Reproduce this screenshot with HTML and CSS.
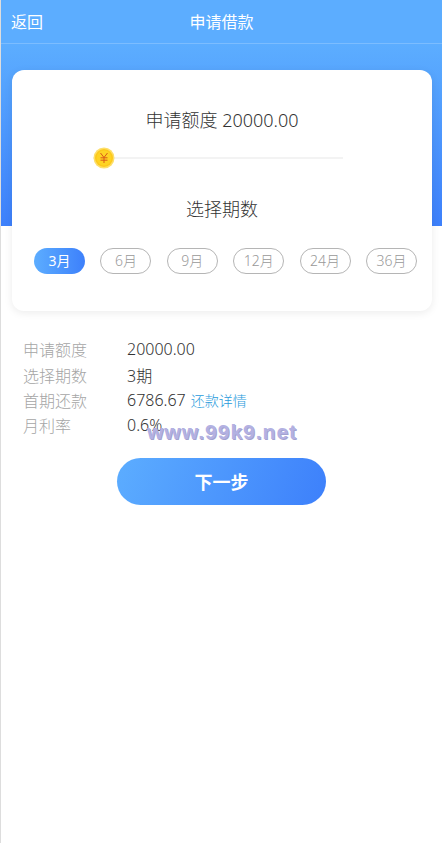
FILE: index.html
```html
<!DOCTYPE html>
<html lang="zh-CN">

<head>
    <meta charset="UTF-8">
    <meta name="viewport" content="width=device-width, initial-scale=1.0">
    <title>申请借款</title>
    <link rel="stylesheet" href="styles.css">
</head>

<body>
    <div class="page">
        <div class="top-bg">
            <header class="top-bar">
                <a class="back">返回</a>
                <h1 class="top-title">申请借款</h1>
            </header>
        </div>

        <section class="card">
            <p class="card-title">申请额度 20000.00</p>
            <div class="slider">
                <div class="slider-line"></div>
                <svg class="coin" width="22" height="22" viewBox="0 0 22 22">
                    <circle cx="11" cy="11" r="10.5" fill="#fddf6b"/>
                    <circle cx="11" cy="11" r="9" fill="#fdc91c"/>
                    <circle cx="11" cy="11" r="7.5" fill="#fed324"/>
                    <path d="M7.5 6 L11 10.5 L14.5 6 M11 10.5 V16 M7.5 10.8 H14.5 M7.5 13.2 H14.5" fill="none" stroke="#d9591a" stroke-width="1"/>
                </svg>
            </div>
            <p class="card-title term-title">选择期数</p>
            <ul class="terms">
                <li class="term select">3月</li>
                <li class="term">6月</li>
                <li class="term">9月</li>
                <li class="term">12月</li>
                <li class="term">24月</li>
                <li class="term">36月</li>
            </ul>
        </section>

        <section class="info">
            <div class="info-row"><span class="info-label">申请额度</span><span class="info-value">20000.00</span></div>
            <div class="info-row"><span class="info-label">选择期数</span><span class="info-value">3期</span></div>
            <div class="info-row"><span class="info-label">首期还款</span><span class="info-value">6786.67</span><a class="info-link">还款详情</a></div>
            <div class="info-row"><span class="info-label">月利率</span><span class="info-value">0.6%</span></div>
        </section>

        <button class="next-btn">下一步</button>

        <div class="watermark">www.99k9.net</div>
    </div>
</body>

</html>
```
FILE: styles.css
```css
* {
    box-sizing: border-box;
}

body {
    margin: 0;
    background: #fff;
    font-family: "Noto Sans", "Noto Sans CJK SC", sans-serif;
    font-weight: 300;
    color: #333;
}

.page {
    position: relative;
    height: 843px;
    overflow: hidden;
    border-left: 1px solid #ddd;
}

.top-bg {
    height: 226px;
    background: linear-gradient(180deg, #5cadff 0%, #5cadff 20%, #3d80fb 100%);
}

.top-bar {
    display: flex;
    align-items: center;
    justify-content: center;
    position: relative;
    height: 44px;
    padding-bottom: 2px;
    border-bottom: 1px solid #7cbdff;
    color: #fff;
    font-weight: 400;
}

.back {
    position: absolute;
    left: 10px;
    font-size: 16px;
}

.top-title {
    margin: 0;
    font-size: 16px;
    font-weight: 400;
}

.card {
    margin: -156px 10px 0 11px;
    position: relative;
    height: 241px;
    padding-top: 36px;
    background: #fff;
    border-radius: 12px;
    box-shadow: 0 2px 8px rgba(0, 0, 0, 0.08);
}

.card-title {
    margin: 0;
    text-align: center;
    font-size: 18px;
    line-height: 28px;
}

.slider {
    position: relative;
    height: 22px;
    margin: 13px 89px 0 81px;
    display: flex;
    align-items: center;
}

.slider-line {
    width: 100%;
    height: 2px;
    background: #f3f3f3;
}

.coin {
    position: absolute;
    left: 0;
    top: 0;
}

.term-title {
    margin-top: 26px;
}

.terms {
    list-style: none;
    margin: 25px 0 0;
    padding: 0 15px 0 22px;
    display: flex;
    justify-content: space-between;
}

.term {
    width: 51px;
    height: 26px;
    border: 1px solid #b5b5b5;
    border-radius: 13px;
    color: #999;
    font-size: 14px;
    line-height: 24px;
    text-align: center;
}

.term.select {
    border: 0;
    line-height: 26px;
    color: #fff;
    font-weight: 400;
    background: linear-gradient(90deg, #5cadff, #3d80fb);
}

.info {
    margin-top: 25.5px;
    padding-left: 22px;
}

.info-row {
    display: flex;
    align-items: center;
    height: 25.4px;
    font-size: 16px;
}

.info-label {
    width: 104px;
    color: #a5a5a5;
}

.info-link {
    margin-left: 5px;
    font-size: 14px;
    color: #1f9bdc;
}

.next-btn {
    display: block;
    width: 209px;
    height: 47px;
    margin: 19.5px 0 0 116px;
    border: 0;
    border-radius: 24px;
    background: linear-gradient(110deg, #5cadff, #3d80fb);
    color: #fff;
    font-family: inherit;
    font-size: 18px;
    font-weight: 700;
}

.watermark {
    position: absolute;
    left: 146px;
    top: 420px;
    font-family: "Liberation Sans", sans-serif;
    font-size: 21px;
    font-weight: 700;
    letter-spacing: 1px;
    color: #b3b1e2;
    text-shadow: 1px 1px 0 #a3a2d0;
}
```
